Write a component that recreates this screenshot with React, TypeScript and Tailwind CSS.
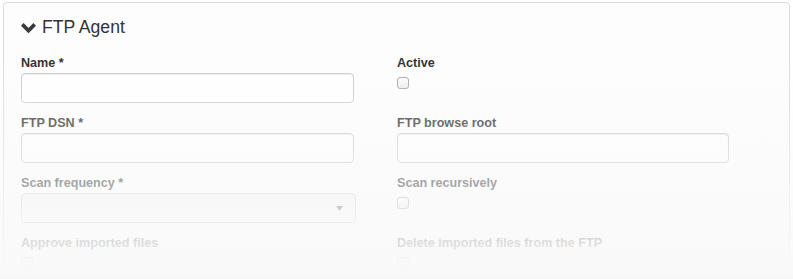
import React from "react";

const font = { fontFamily: '"Liberation Sans", Arial, Helvetica, sans-serif' };

function Label({ children }: { children: React.ReactNode }) {
  return (
    <label className="block h-[18px] text-[12.6px] leading-[18px] font-bold text-[#333] mb-[1px] whitespace-nowrap">
      {children}
    </label>
  );
}

function TextInput({ w }: { w: string }) {
  return (
    <div
      className={`${w} h-[30px] rounded-[4px] border border-[#cccccc] bg-white shadow-[inset_0_1px_1px_rgba(0,0,0,0.075)]`}
    />
  );
}

function Checkbox() {
  return (
    <div className="mt-[5px] w-[12px] h-[12px] rounded-[3px] border border-[#a9a9a9] bg-gradient-to-b from-white to-[#ececec]" />
  );
}

export default function App() {
  return (
    <div className="relative w-[793px] h-[279px] overflow-hidden bg-white" style={font}>
      <div className="ml-[3px] mt-[2px] w-[787px] h-[330px] rounded-[4px] border border-[#dcdcdc] bg-[#fdfdfd] pl-[17px] pt-[12px]">
        <div className="flex items-center h-[24px]">
          <svg width="15" height="11" viewBox="0 0 15 11" className="mt-[2px]">
            <path d="M0 2.7 L2.6 0.1 L7.5 5 L12.4 0.1 L15 2.7 L7.5 10.2 Z" fill="#3a3a3a" />
          </svg>
          <span className="ml-[6px] text-[17.6px] leading-[24px] text-[#333]">FTP Agent</span>
        </div>
        <div className="mt-[15px] grid grid-cols-[333px_335px] gap-x-[43px] gap-y-[11px]">
          <div>
            <Label>Name *</Label>
            <TextInput w="w-[333px]" />
          </div>
          <div>
            <Label>Active</Label>
            <Checkbox />
          </div>
          <div>
            <Label>FTP DSN *</Label>
            <TextInput w="w-[333px]" />
          </div>
          <div>
            <Label>FTP browse root</Label>
            <TextInput w="w-[332px]" />
          </div>
          <div>
            <Label>Scan frequency *</Label>
            <div className="relative w-[335px] h-[30px] rounded-[4px] border border-[#cccccc] bg-gradient-to-b from-[#f3f3f3] to-[#fbfbfb]">
              <svg width="7" height="5" viewBox="0 0 7 5" className="absolute right-[12px] top-[12px]">
                <path d="M0 0 L7 0 L3.5 5 Z" fill="#666" />
              </svg>
            </div>
          </div>
          <div>
            <Label>Scan recursively</Label>
            <Checkbox />
          </div>
          <div>
            <Label>Approve imported files</Label>
            <Checkbox />
          </div>
          <div>
            <Label>Delete imported files from the FTP</Label>
            <Checkbox />
          </div>
        </div>
      </div>
      <div className="pointer-events-none absolute inset-0 bg-[linear-gradient(to_bottom,rgba(249,249,249,0)_60px,rgba(249,249,249,0.97)_267px,rgba(247,247,247,1)_279px)]" />
    </div>
  );
}
